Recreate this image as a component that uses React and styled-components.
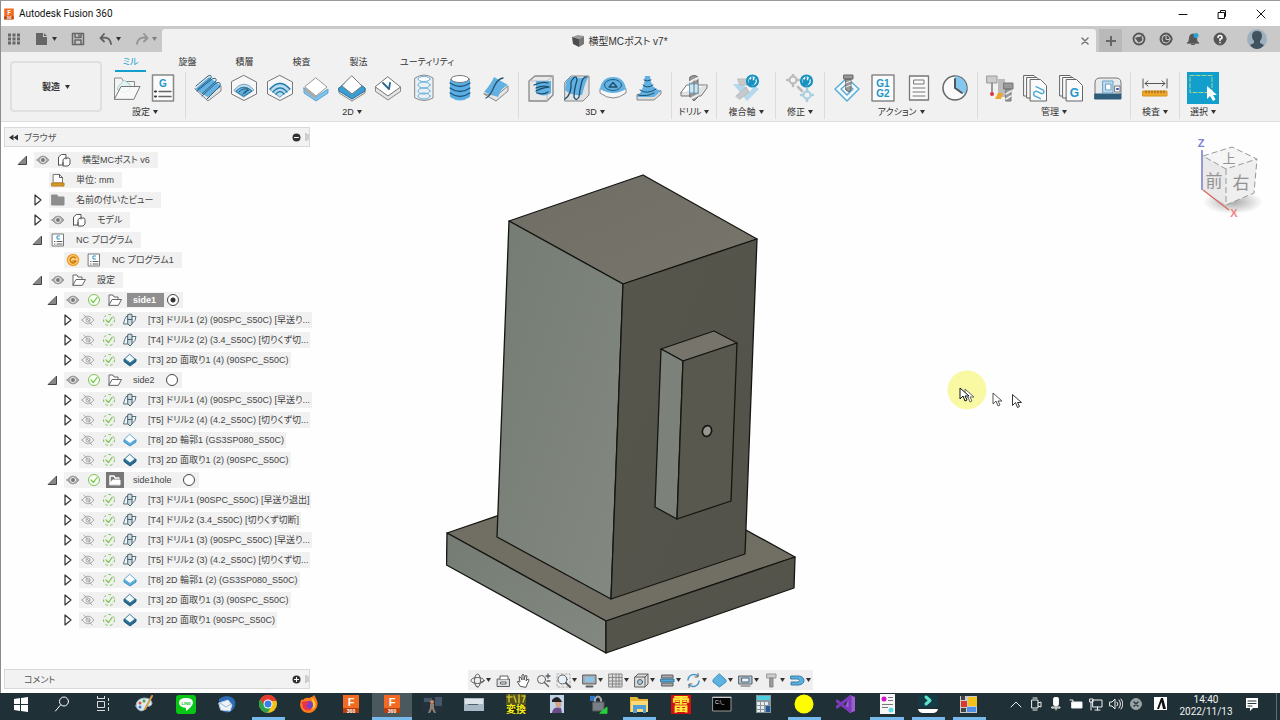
import React, { useState } from 'react'
import styled, { createGlobalStyle, css } from 'styled-components'

const colors = {
  chrome: '#c9c9c9',
  panel: '#f1f1f1',
  line: '#d9d9d9',
  text: '#333',
  icon: '#5b5f62',
  blue: '#62b1e2',
  deepblue: '#2384b8',
  accent: '#129fce',
  green: '#7cc255',
  taskbar: '#1f3036',
}

const uiFont = '"Liberation Sans", "Noto Sans CJK JP", sans-serif'
const winFont = 'Roboto, "Noto Sans CJK JP", sans-serif'

const GlobalStyle = createGlobalStyle`
  * { box-sizing: border-box; }
  body {
    margin: 0;
    background: #fff;
    color: ${colors.text};
    font-family: ${uiFont};
    font-size: 9px;
    font-feature-settings: 'palt';
  }
  button {
    padding: 0;
    border: 0;
    background: none;
    color: inherit;
    font: inherit;
    font-feature-settings: inherit;
  }
  svg { display: block; flex-shrink: 0; }
`

const Page = styled.div`
  display: flex;
  flex-direction: column;
  min-height: 100vh;
`

const Window = styled.div`
  display: flex;
  flex-direction: column;
  flex-grow: 1;
  border-top: 1px solid #9a9a9a;
  border-left: 1px solid #8c8c8c;
`

const TitleBar = styled.header`
  display: flex;
  align-items: center;
  height: 25px;
  padding-left: 2px;
  background: #fff;
  font-family: ${winFont};
  font-size: 10px;
  color: #111;
`

const AppName = styled.h1`
  flex-grow: 1;
  margin: 0 0 0 4px;
  font-size: 10px;
  font-weight: 400;
`

const WindowButton = styled.button`
  display: flex;
  align-items: center;
  justify-content: center;
  width: 39px;
  height: 25px;
`

const TabBar = styled.div`
  display: flex;
  height: 26px;
  background: ${colors.chrome};
`

const QuickTools = styled.div`
  display: flex;
  align-items: center;
  gap: 14px;
  width: 161px;
  padding-left: 6px;
  color: #5f5f5f;
`

const QuickButton = styled.button`
  display: flex;
  align-items: center;
  gap: 3px;
  opacity: ${(props) => (props.$dim ? 0.5 : 1)};
`

const DocumentTab = styled.div`
  display: flex;
  flex-grow: 1;
  align-items: center;
  margin-top: 3px;
  padding: 0 3px 0 0;
  border-radius: 3px 3px 0 0;
  background: ${colors.panel};
  font-size: 10px;
`

const DocumentName = styled.div`
  display: flex;
  flex-grow: 1;
  align-items: center;
  justify-content: center;
  gap: 3px;
`

const TabClose = styled.button`
  display: flex;
  padding: 4px;
  color: #777;
`

const NewTab = styled.button`
  display: flex;
  align-items: center;
  justify-content: center;
  width: 23px;
  margin: 3px 3px 0 3px;
  background: #b9b9b9;
  color: #666;
`

const AccountButton = styled.button`
  display: flex;
  align-items: center;
  justify-content: center;
  width: ${(props) => (props.$wide ? 47 : 27)}px;
  color: #555;
`

const Ribbon = styled.div`
  display: flex;
  height: 70px;
  background: ${colors.panel};
  border-bottom: 1px solid #dedede;
`

const WorkspaceButton = styled.button`
  display: flex;
  align-items: center;
  justify-content: center;
  gap: 5px;
  width: 92px;
  height: 51px;
  margin: 9px 0 0 9px;
  border: 2px solid #e0e0e0;
  border-radius: 4px;
  font-weight: 700;
`

const RibbonBody = styled.div`
  flex-grow: 1;
`

const RibbonTabs = styled.nav`
  display: flex;
  height: 20px;
`

const RibbonTab = styled.button`
  display: flex;
  align-items: center;
  justify-content: center;
  min-width: 57px;
  padding: 0 5px;
  color: ${(props) => (props.$active ? colors.accent : colors.text)};

  & span {
    height: 20px;
    padding: 0 8px;
    line-height: 20px;
    border-bottom: 2px solid ${(props) => (props.$active ? colors.accent : 'transparent')};
  }
`

const Groups = styled.div`
  display: flex;
  padding-left: 3px;
`

const Group = styled.section`
  padding: 0 ${(props) => props.$pad || 4}px;
  border-right: 1px solid ${(props) => (props.$last ? 'transparent' : '#dcdcdc')};
`

const GroupTools = styled.div`
  display: flex;
`

const ToolButton = styled.button`
  display: flex;
  align-items: center;
  justify-content: center;
  width: 36px;
  height: 32px;
`

const GroupLabel = styled.button`
  display: flex;
  align-items: center;
  justify-content: center;
  gap: 3px;
  width: 100%;
  height: 15px;
  white-space: nowrap;
`

const Workspace = styled.main`
  position: relative;
  display: grid;
  grid-template-columns: 309px 1fr 309px;
  grid-template-rows: 1fr 24px;
  flex-grow: 1;
  background: #fefefe;
`

const Browser = styled.aside`
  padding: 5px 0 0 3px;
`

const PanelBar = styled.div`
  display: flex;
  align-items: center;
  gap: 4px;
  height: 20px;
  margin-left: ${(props) => (props.$bottom ? 3 : 0)}px;
  padding: 0 0 0 4px;
  border: 1px solid ${colors.line};
  background: #f2f2f2;
  color: #555;
`

const PanelTitle = styled.span`
  flex-grow: 1;
  padding-left: ${(props) => (props.$indent ? 15 : 2)}px;
`

const Tree = styled.ul`
  margin: 3px 0 0;
  padding: 0;
  list-style: none;
`

const TreeRow = styled.li`
  display: flex;
  align-items: center;
  gap: 4px;
  height: 20px;
  padding-left: ${(props) => 12 + props.$level * 15}px;
`

const Expander = styled.button`
  display: flex;
  align-items: center;
  justify-content: center;
  flex-shrink: 0;
  width: 14px;
  height: 16px;
`

const TreeItem = styled.div`
  display: flex;
  align-items: center;
  gap: 3px;
  height: 16px;
  padding-right: ${(props) => (props.$radio ? 4 : 0)}px;
  background: #f1f1f1;
  white-space: nowrap;
`

const IconCell = styled.span`
  display: flex;
  align-items: center;
  justify-content: center;
  width: 18px;
  height: 16px;
  background: ${(props) => (props.$selected ? '#777' : 'transparent')};
`

const TreeLabel = styled.label`
  padding: 0 ${(props) => (props.$tight ? 2 : 8)}px 0 6px;
  line-height: 14px;
  color: #444;
  ${(props) => props.$selected && css`
    background: #8f8f8f;
    color: #fff;
    font-weight: 700;
  `}
`

const ActiveRadio = styled.input`
  appearance: none;
  width: 12px;
  height: 12px;
  margin: 0;
  border: 1px solid #444;
  border-radius: 50%;
  background: #fff;

  &:checked {
    background: radial-gradient(circle, #333 0 2px, #fff 3px);
  }
`

const Canvas = styled.section`
  display: flex;
  align-items: center;
  justify-content: center;
`

const CubeArea = styled.section`
  display: flex;
  justify-content: flex-end;
  padding: 14px 17px 0 0;
`

const Pointers = styled.svg`
  position: absolute;
  left: 944px;
  top: 245px;
`

const NavBar = styled.div`
  display: flex;
  align-items: center;
  justify-self: center;
  gap: 5px;
  height: 20px;
  margin-top: 1px;
  padding: 0 2px;
  background: #efefef;
`

const NavButton = styled.button`
  display: flex;
  align-items: center;
  gap: 1px;
`

const TaskBar = styled.footer`
  display: flex;
  height: 27px;
  overflow: hidden;
  background: ${colors.taskbar};
  color: #f2f2f2;
`

const TaskButtons = styled.div`
  display: grid;
  grid-template-columns: repeat(24, 1fr);
  width: 990px;
`

const TaskButton = styled.button`
  display: flex;
  align-items: center;
  justify-content: center;
  height: 27px;
  padding-bottom: ${(props) => (props.$running ? 3 : 6)}px;
  border-bottom: ${(props) => (props.$running ? 3 : 0)}px solid #76b9ed;
  background: ${(props) => (props.$active ? '#4b585d' : 'transparent')};
  margin: 0 ${(props) => (props.$active ? 1 : 4)}px;
`

const Tray = styled.div`
  display: flex;
  flex-grow: 1;
  align-items: center;
  justify-content: flex-end;
  padding-bottom: 6px;
`

const TrayButton = styled.button`
  display: flex;
  align-items: center;
  justify-content: center;
  width: ${(props) => (props.$wide ? 28 : 20)}px;
`

const Clock = styled.time`
  width: 64px;
  padding-top: 4px;
  text-align: center;
  font-family: ${winFont};
  font-size: 10px;
  line-height: 12px;
`

const ShowDesktop = styled.button`
  width: 4px;
  height: 32px;
  margin-left: 10px;
  border-left: 1px solid #5f6c70;
`

function Icon({ size = 14, box = size, children, ...rest }) {
  return (
    <svg width={size} height={size} viewBox={`0 0 ${box} ${box}`} fill="none" stroke={colors.icon} strokeLinejoin="round" strokeLinecap="round" aria-hidden="true" {...rest}>
      {children}
    </svg>
  )
}

const Caret = () => (
  <svg width="5" height="4" viewBox="0 0 5 4" aria-hidden="true"><path d="M0 0h5L2.500 4z" fill="#333" /></svg>
)

const Grip = () => (
  <svg width="4" height="10" viewBox="0 0 4 10" aria-hidden="true"><path d="M1 1v8M3 2v6" stroke="#aaa" /></svg>
)

const hexBox = <path d="M14 1.500 26.500 8v12L14 26.500 1.500 20V8z" fill="#f7f7f7" stroke="#777" />

const sheet = (
  <g fill="#fafafa" stroke="#666">
    <path d="M2 1.500h10l5 5V22H2z" />
    <path d="M5 3.500h10l5 5V24H5z" />
    <path d="M8.500 5.500h10l6 6V27h-16z" />
  </g>
)

const disabledBadge = (
  <g>
    <circle cx="20.500" cy="7" r="5.500" fill="#eef8fc" stroke="#1791be" strokeWidth="2.200" />
    <path d="M17.500 6l5.500 1.500-2 3-4 .5zM20 6V3M22.500 7l1-3" fill="#1791be" stroke="#1791be" strokeWidth="1.500" />
  </g>
)

const toolIcons = {
  folder: (
    <g>
      <path d="M1.500 25V4h7l2 3.500h11V13" fill="#f4f4f4" stroke="#888" />
      <path d="M5 13l6-7 6 4.500v5L11 19l-6-3z" fill="#e4f3f2" stroke="#a8cfce" />
      <path d="M1.500 25 8 12.500h19L21 25z" fill="#fafafa" fillOpacity=".8" stroke="#777" />
    </g>
  ),
  ncProgram: (
    <g>
      <path d="M3.500 1h21v26h-21z" fill="#fafafa" stroke="#888" strokeWidth="1.500" />
      <text x="14" y="12.500" textAnchor="middle" fontSize="10" fontWeight="700" fill="#1f96cc" stroke="none">G</text>
      <path d="M10 17.500h12M10 22.500h12" stroke="#666" strokeWidth="1.500" />
      <path d="M6 17.500h1M6 22.500h1" stroke="#333" strokeWidth="2" />
    </g>
  ),
  adaptive: (
    <g>
      <path d="M1 15 14 27l13-10v-5L14 22z" fill="#e2e2e2" stroke="#888" />
      <path d="M1 15 15 3l12 9-13 11z" fill={colors.blue} stroke="none" />
      <path d="M2 12 14 2q4-2 3 2L4 15M3 17 18 5q5-2 4 2L8 20M8 22 22 9q5-2 4 3L13 25" stroke="#2c6283" />
    </g>
  ),
  pocket: (
    <g>
      {hexBox}
      <path d="M4 16q10-12 20 0L14 23z" fill="#c8dfec" stroke="#75a6c0" />
      <path d="M6 17q8-8 16 0l-8 5z" fill={colors.blue} stroke="#28779f" />
      <path d="M9 18q3-4 9-3-1 4-5 5M14 18l5-2" stroke="#24546e" />
    </g>
  ),
  hexArc: (
    <g>
      {hexBox}
      <path d="M4 15q10-12 20 0L14 23z" fill="#b9dbee" stroke="#5a9cc0" />
      <path d="M7 18q7-8 14 0M10 20q4-5 8 0M4 15q10-11 20 0" stroke="#287fae" strokeWidth="1.500" />
    </g>
  ),
  contour: (
    <g>
      <path d="M2 17v2l12 8 12-8v-4L14 23 2 14z" fill="#7dc2ec" stroke="#5aa7d4" />
      <path d="M14 4 25 13 14 22 3 13z" fill="#fff" stroke="#999" />
      <path d="M3 13v4l11 8v-3z" fill="#aaa" stroke="none" />
    </g>
  ),
  chamfer: (
    <g>
      <path d="M1 14v5l13 8 13-8v-5L14 23z" fill="#e5e5e5" stroke="#888" />
      <path d="M1 14 14 4l13 10v3L14 25 1 17z" fill="#3a9ed4" stroke="#2a7198" />
      <path d="M14 2 24 12 14 20 4 12z" fill="#fff" stroke="#777" />
    </g>
  ),
  engrave: (
    <g>
      <path d="M1.500 13v4.500L14 26l12.500-8.500V13" fill="#e4e4e4" stroke="#888" />
      <path d="M14 3 26.500 13 14 22 1.500 13z" fill="#fff" stroke="#777" />
      <path d="m9 9 6 6 1-6" stroke="#27678e" strokeWidth="1.800" />
    </g>
  ),
  thread: (
    <g>
      <path d="M5 4q9-6 18 0v20q-9 5-18 0z" fill="#eaeff2" stroke="#888" />
      <ellipse cx="14" cy="5" rx="6" ry="2.500" fill="#fff" stroke="#62aee0" />
      <ellipse cx="14" cy="11" rx="6" ry="3" stroke="#62aee0" />
      <ellipse cx="14" cy="17" rx="6" ry="3" stroke="#62aee0" />
      <ellipse cx="14" cy="22" rx="6" ry="3" stroke="#62aee0" />
    </g>
  ),
  bore: (
    <g>
      <path d="M4 5v18q10 7 20 0V5z" fill="#5aaee3" stroke="none" />
      <ellipse cx="14" cy="5" rx="9" ry="3.500" fill="#fff" stroke="#777" />
      <path d="M4 9q10 7 20 0M4 14q10 7 20 0M4 19q10 7 20 0" stroke="#22597b" strokeWidth="1.300" />
    </g>
  ),
  ruled: (
    <g>
      <path d="M2 20 14 27l12-10v-5L15 21z" fill="#e4e4e4" stroke="#888" />
      <path d="M2 18Q9 10 12 3l14 8q-7 3-10 12z" fill={colors.blue} stroke="none" />
      <path d="M4 24q4-2 7-9 4-10 10-11" stroke="#245674" strokeWidth="1.300" />
    </g>
  ),
  adaptive3d: (
    <g>
      <path d="M2 7 8 2h18v19l-6 6H2z" fill="#e9e9e9" stroke="#888" strokeWidth="1.300" />
      <path d="M2 7h18v20M20 7l6-5" stroke="#bbb" />
      <path d="M9 7h15v12q-7 5-15 0z" fill={colors.blue} stroke="none" />
      <path d="M7 11q8-4 14-2M9 14q7-3 13-1-8 1-13 4M10 19q7 2 11-1" stroke="#1d4f6d" strokeWidth="1.300" />
    </g>
  ),
  parallel: (
    <g>
      <path d="M2 8 8 2h18v19l-6 6H2z" fill="#e2e2e2" stroke="#888" />
      <path d="M3 8q4-6 9-5 7 2 13 0-4 9-6 18Q8 22 2 16z" fill={colors.blue} stroke="none" />
      <path d="M2 25Q9 20 8 8q5-9 6-2-3 10-3 17 2 5 5 0 1-9 3-16 2-5 5-4" stroke="#1d4f6d" strokeWidth="1.300" />
    </g>
  ),
  scallop: (
    <g>
      <path d="M1 15v4q13 10 26 0v-4z" fill="#f7f7f7" stroke="#888" />
      <path d="M1 15Q3 3 14 3t13 12q-13 8-26 0z" fill={colors.blue} stroke="none" />
      <ellipse cx="14" cy="11" rx="8.500" ry="5.500" stroke="#246183" />
      <path d="M14 8.500 18 13h-8z" stroke="#1d4f6d" strokeWidth="1.300" />
    </g>
  ),
  ramp: (
    <g>
      <path d="M2 21v5h17l7-6v-3z" fill="#ddd" stroke="#888" />
      <path d="M10 2h5q0 12 11 15l-7 6H2q7-7 8-21z" fill={colors.blue} stroke="none" />
      <path d="M9 6q3 2 7 0M8 11q4 4 10 0M5 16q7 5 16-1M3 21q9 2 16-2" stroke="#1d4f6d" />
    </g>
  ),
  drill: (
    <g>
      <path d="M7 11h20l-6 8H1z" fill="#fff" stroke="#777" />
      <path d="M1 19v3h20l6-8v-3" fill="#e2e2e2" stroke="#777" />
      <path d="M10 3q4-3 8 0v20l-4 4-4-4z" fill="#999" stroke="#666" />
      <path d="M10 8l8-4M10 25l8-4" stroke="#eee" strokeWidth="2" />
      <path d="M10 10h8v9h-8z" fill="#cde7f5" stroke="#6da9cb" />
      <path d="M14 7v13" stroke="#777" />
    </g>
  ),
  multiAxis: (
    <g>
      <path d="M1 10h10l6 8 6-6 4 3-12 12z" fill="#b5d9ec" stroke="none" />
      <path d="m4 22 10-9 3 5-9 7zM6 5h9v6H8z" fill="#c6c8ca" stroke="#bbb" />
      {disabledBadge}
    </g>
  ),
  modify: (
    <g>
      <circle cx="7" cy="6" r="3.500" stroke="#bbb" strokeWidth="2" />
      <path d="M7 0v2M7 10v2M1 6h2M11 6h2M12 13l4 4" stroke="#bbb" strokeWidth="2.500" />
      <circle cx="21" cy="21" r="3.500" stroke="#a9cfdf" strokeWidth="2" />
      <path d="M21 15v2M21 25v2M15 21h2M25 21h2" stroke="#a9cfdf" strokeWidth="2.500" />
      {disabledBadge}
    </g>
  ),
  simulate: (
    <g>
      <path d="M14 4 26 15 14 27 2 15z" fill="#f3fafd" stroke="#5aaed4" strokeWidth="1.500" />
      <path d="m14 10 6 5-6 6-6-6z" stroke="#5aaed4" strokeWidth="1.500" />
      <path d="M11 1h9v4h-9zM13 5h5v11l-2 2-3-2z" fill="#999" stroke="#666" />
      <path d="m13 9 5-2M13 13l5-2" stroke="#eee" />
    </g>
  ),
  post: (
    <g>
      <path d="M3 1h22v26H3z" fill="#fafafa" stroke="#888" strokeWidth="1.500" />
      <text x="14" y="13" textAnchor="middle" fontSize="10" fontWeight="700" fill="#2294c8" stroke="none">G1</text>
      <text x="14" y="23" textAnchor="middle" fontSize="10" fontWeight="700" fill="#2294c8" stroke="none">G2</text>
    </g>
  ),
  setupSheet: (
    <g>
      <path d="M4.500 2h19v24h-19z" fill="#fafafa" stroke="#777" strokeWidth="1.300" />
      <path d="M9 6h10v4H9zM8 14h12M8 18h12M8 22h12" stroke="#777" />
    </g>
  ),
  time: (
    <g>
      <circle cx="14" cy="14" r="12" fill="#fafafa" stroke="#666" strokeWidth="1.500" />
      <path d="M14 2a12 12 0 0 1 10 18l-10-6z" fill="#84c8f0" stroke="none" />
      <path d="M14 5v9l7 5" stroke="#555" strokeWidth="2" />
    </g>
  ),
  toolLibrary: (
    <g>
      <path d="M1 2h10v7H1z" fill="#ccc" stroke="#999" />
      <path d="M6 9v9" stroke="#999" strokeWidth="2" />
      <circle cx="6" cy="20" r="2" fill="#d34" stroke="none" />
      <path d="M12 5h7v18h-7z" fill="#bbb" stroke="none" />
      <path d="m9 25 3-6h5l-2 6z" fill="#eaa92a" stroke="none" />
      <path d="M18 9h9v6h-9zM20 15h5v12h-5z" fill="#999" stroke="#777" />
      <path d="m20 20 5-3M20 25l5-3" stroke="#eee" strokeWidth="1.500" />
    </g>
  ),
  templates: (
    <g>{sheet}<path d="M12 14h8q3 2 0 4h-6q-3 2 0 5h7" stroke="#4aa9d7" strokeWidth="1.500" transform="rotate(25 16 18)" /></g>
  ),
  postLibrary: (
    <g>{sheet}<text x="16.500" y="23" textAnchor="middle" fontSize="12" fontWeight="700" fill="#1f96cc" stroke="none">G</text></g>
  ),
  machine: (
    <g>
      <path d="M1 20V9q0-5 5-5h16q5 0 5 5v11z" fill="#e7ebed" stroke="#777" />
      <path d="M1 20h26v5H1z" fill="#2f5e7a" stroke="#2f5e7a" />
      <path d="M9 7h10v12H9z" fill="#bcdcf0" stroke="#6a9fc0" />
      <path d="M12 10h5v6h-5z" fill="#fff" stroke="#6a9fc0" />
      <path d="M21 12h5v6h-5z" fill="#fff" stroke="#777" />
      <path d="M23 15h1" stroke="#35a" strokeWidth="2" />
    </g>
  ),
  measure: (
    <g>
      <path d="M2 5v9M26 5v9M4 9.500h20M7 7 4 9.500 7 12M21 7l3 2.500L21 12" stroke="#555" />
      <path d="M2 17h24v5H2z" fill="#f0a92e" stroke="#d89018" />
      <path d="M5 17v2M8 17v2M11 17v2M14 17v2M17 17v2M20 17v2M23 17v2" stroke="#8a5a10" />
    </g>
  ),
}

const groups = [
  { label: '設定', tools: [['folder', '新規設定'], ['ncProgram', 'NC プログラム']] },
  {
    label: '2D',
    tools: [['adaptive', '負荷制御'], ['pocket', 'ポケット'], ['hexArc', '面'], ['contour', '輪郭'], ['chamfer', '面取り'], ['engrave', '彫り込み'], ['thread', 'ねじ切り'], ['bore', '穴ぐり'], ['ruled', 'トレース']],
  },
  { label: '3D', tools: [['adaptive3d', '負荷制御'], ['parallel', '走査線'], ['scallop', 'スカラップ'], ['ramp', '等高線']] },
  { label: 'ドリル', tools: [['drill', 'ドリル']] },
  { label: '複合軸', pad: 11, tools: [['multiAxis', '複合軸']] },
  { label: '修正', pad: 6, tools: [['modify', '修正']] },
  { label: 'アクション', tools: [['simulate', 'シミュレート'], ['post', 'ポスト処理'], ['setupSheet', '設定シート'], ['time', '加工時間']] },
  { label: '管理', tools: [['toolLibrary', '工具ライブラリ'], ['templates', 'テンプレート'], ['postLibrary', 'ポストライブラリ'], ['machine', '機械ライブラリ']] },
  { label: '検査', pad: 6, tools: [['measure', '計測']] },
]

const ribbonTabs = ['ミル', '旋盤', '積層', '検査', '製法', 'ユーティリティ']

const treeIcons = {
  eye: <Icon size={14}><path d="M1 7q6-8 12 0-6 8-12 0z" fill="#aaa" stroke="#999" /><circle cx="7" cy="7" r="2.500" fill="#777" stroke="#eee" /></Icon>,
  hidden: <Icon size={14} stroke="#aaa"><path d="M1 7q6-8 12 0-6 8-12 0zM3 2l8 10" /><circle cx="7" cy="7" r="2" /></Icon>,
  body: <Icon size={14}><path d="M1.500 12V4l3-2.500H9V6M1.500 12H6V6.500L8 5h4l1 1.500V11l-2 2H6V9.500" fill="#fff" stroke="#555" /></Icon>,
  units: <Icon size={14}><path d="M2.500 1.500h6l3 3V10h-9z" fill="#fff" stroke="#777" /><path d="M8.500 1.500v3h3" /><path d="M1 10h12v3H1z" fill="#d69a2a" stroke="#b87d14" /></Icon>,
  closedFolder: <Icon size={14}><path d="M1 2h5l1 2h6v8H1z" fill="#8d8d8d" stroke="#8d8d8d" /></Icon>,
  nc: <Icon size={14}><path d="M1.500 1h11v12h-11z" fill="#fff" stroke="#777" /><path d="M8.500 3H6v3h2.500" stroke="#2a91c4" /><path d="M6 8.500h5M6 11h5M3.500 8.500h.5M3.500 11h.5" /></Icon>,
  stale: <Icon size={14}><circle cx="7" cy="7" r="5.500" fill="#ffd591" stroke="#f0a02c" strokeWidth="1.500" /><path d="M9.500 5A3 3 0 1 0 10 8H7" stroke="#d07a00" strokeWidth="1.500" /></Icon>,
  openFolder: <Icon size={14}><path d="M1 12V2h4l1 2h4v2.500M1 12l3-5.500h9.500L10.500 12z" fill="#fff" stroke="#666" /></Icon>,
  selectedFolder: <Icon size={14}><path d="M2 11V3h4l1 2h4" stroke="#fff" strokeWidth="1.500" /><path d="M2 11.500 4.500 7H12v4.500z" fill="#fff" stroke="#fff" /></Icon>,
  ok: <Icon size={14} stroke={colors.green}><circle cx="7" cy="7" r="5.500" fill="#f8fff4" /><path d="m4 7 2.500 2.500L10 4.500" strokeWidth="1.300" /></Icon>,
  okDashed: <Icon size={14} stroke={colors.green}><circle cx="7" cy="7" r="5.500" strokeDasharray="2 3" /><path d="m4 7 2.500 2.500L10 4.500" strokeWidth="1.300" /></Icon>,
  drill: <Icon size={14}><path d="M3.500 3.500H13l-1 4-3.500 3.500H.5L1.500 7z" fill="#eef6f8" stroke="#56717c" /><path d="M5 1.500q2-1 4 0V11l-2 2-2-2z" fill="#cfdde2" stroke="#47626d" /><path d="M5 6.500h4" stroke="#47626d" /></Icon>,
  chamfer: <Icon size={14}><path d="M1 6.500v2L7 13l6-4.500v-2z" fill="#1f6d96" stroke="#225873" /><path d="m7 1.500 5 4.500L7 10 2 6z" fill="#f4fbff" stroke="#447c98" /></Icon>,
  contour: <Icon size={14}><path d="M1 7v2l6 4 6-4V7z" fill="#54aee0" stroke="#3d94c6" /><path d="m7 1.500 5.500 5L7 10.500l-5.500-4z" fill="#fff" stroke="#65aad0" /></Icon>,
}

const op = (label, icon = 'drill') => ({ level: 3, state: 'closed', icons: ['hidden', 'okDashed', icon], label })

const tree = [
  { level: 0, state: 'open', icons: ['eye', 'body'], label: '横型MCポスト v6' },
  { level: 1, icons: ['units'], label: '単位: mm' },
  { level: 1, state: 'closed', icons: ['closedFolder'], label: '名前の付いたビュー' },
  { level: 1, state: 'closed', icons: ['eye', 'body'], label: 'モデル' },
  { level: 1, state: 'open', icons: ['nc'], label: 'NC プログラム' },
  { level: 2, icons: ['stale', 'nc'], label: 'NC プログラム1' },
  { level: 1, state: 'open', icons: ['eye', 'openFolder'], label: '設定' },
  { level: 2, state: 'open', icons: ['eye', 'ok', 'openFolder'], label: 'side1', radio: true, selected: true },
  op('[T3] ドリル1 (2) (90SPC_S50C) [早送り...'),
  op('[T4] ドリル2 (2) (3.4_S50C) [切りくず切...'),
  op('[T3] 2D 面取り1 (4) (90SPC_S50C)', 'chamfer'),
  { level: 2, state: 'open', icons: ['eye', 'ok', 'openFolder'], label: 'side2', radio: true },
  op('[T3] ドリル1 (4) (90SPC_S50C) [早送り...'),
  op('[T5] ドリル2 (4) (4.2_S50C) [切りくず切...'),
  op('[T8] 2D 輪郭1 (GS3SP080_S50C)', 'contour'),
  op('[T3] 2D 面取り1 (2) (90SPC_S50C)', 'chamfer'),
  { level: 2, state: 'open', icons: ['eye', 'ok', 'selectedFolder'], label: 'side1hole', radio: true },
  op('[T3] ドリル1 (90SPC_S50C) [早送り退出]'),
  op('[T4] ドリル2 (3.4_S50C) [切りくず切断]'),
  op('[T3] ドリル1 (3) (90SPC_S50C) [早送り...'),
  op('[T5] ドリル2 (3) (4.2_S50C) [切りくず切...'),
  op('[T8] 2D 輪郭1 (2) (GS3SP080_S50C)', 'contour'),
  op('[T3] 2D 面取り1 (3) (90SPC_S50C)', 'chamfer'),
  op('[T3] 2D 面取り1 (90SPC_S50C)', 'chamfer'),
]

const navItems = [
  ['オービット', true, <><ellipse cx="7.500" cy="7.500" rx="6.500" ry="3" /><ellipse cx="7.500" cy="7.500" rx="3" ry="6.500" /><path d="m11 9 3-1M6 13l2 1" /></>],
  ['ビュー正面', false, <><path d="M1.500 6h12v7.500h-12z" fill="#ddd" /><path d="M4 6V3h8v3M5 9h5v2H5z" fill="#fff" /></>],
  ['画面移動', false, <path d="M4 13 1.500 9q0-2 2 0L4 9 3 4q1-1 2 1l1 2V2q1-1 2 0v5l1-4q1-1 2 0l-1 5 2-2q1 0 1 1l-3 7z" fill="#fff" stroke="#555" />],
  ['ズーム', false, <><circle cx="5.500" cy="6.500" r="4" /><path d="m8.500 9.500 4 4M10 3h4M12 1v4M11 8h3" strokeWidth="1.300" /></>],
  ['フィット', true, <><path d="M1 1h13v13H1z" stroke="#aaa" strokeDasharray="2 2" /><circle cx="6.500" cy="6.500" r="4.500" fill="#e8f1f7" /><path d="m10 10 4 4" strokeWidth="2" /></>],
  ['表示設定', true, <><path d="M1 2h13v9H1z" fill="#aaa" /><path d="M3 4h9v5H3z" fill="#8cc5ea" stroke="none" /><path d="M4.500 13.500h6" strokeWidth="2" /></>],
  ['グリッドとスナップ', true, <path d="M1 1h13v13H1zM4.500 1v13M8 1v13M11 1v13M1 4.500h13M1 8h13M1 11h13" fill="#ddd" stroke="#888" />],
  ['ビューポート', true, <><path d="M1 4h10v10H1zM1 4l3-3h10v10l-3 3M11 4l3-3" fill="#ddd" /><circle cx="6" cy="9" r="2.500" fill="#a5cce3" /></>],
  ['環境', true, <><path d="M2 2h11v3H2zM2 10h11v3H2z" fill="#aaa" /><path d="M1 6h13v3H1z" fill="#57a8d8" stroke="#336f92" /></>],
  ['再生成', true, <><path d="M2 7a6 6 0 0 1 10-4M13 8A6 6 0 0 1 3 12" stroke="#3f97c8" strokeWidth="1.500" /><path d="M12 .5V4H9M3 14.500V11h3" stroke="#666" /></>],
  ['オブジェクト表示', true, <path d="m7.500 1 6.500 6v2l-6.500 5L1 9V7z" fill="#5eb2e2" stroke="#3e8db9" />],
  ['カメラ', true, <><path d="M1 3h13v8H1z" fill="#a8c8da" /><path d="M4 5h7v4H4zM3 13h9" fill="#eaf5fb" /></>],
  ['選択フィルタ', true, <><path d="M3 1h9v4H3z" fill="#ccc" stroke="#999" /><path d="M6 5h3v9H6z" fill="#999" stroke="#888" /></>],
  ['スナップ', true, <path d="M1 3h8q5 1 5 4.500T9 12H1V9h7q3-1.500 0-3H1z" fill="#58aee0" stroke="#3a7ea6" />],
]

const fusionLogo = (
  <>
    <path d="M2 1h16v13l-4 5H2z" fill="#f26a21" stroke="none" />
    <path d="M2 14h16v5H2z" fill="#b83f0c" stroke="none" />
    <text x="10" y="11.500" textAnchor="middle" fontSize="11" fontWeight="700" fill="#fff" stroke="none">F</text>
    <text x="10" y="18.500" textAnchor="middle" fontSize="5" fontWeight="700" fill="#fff" stroke="none">360</text>
  </>
)

const tasks = [
  { name: 'スタート', art: <path d="m3 5 6-1v6H3zM10 4l7-1v7h-7zM3 11h6v6l-6-1zM10 11h7v7l-7-1z" fill="#fff" stroke="none" /> },
  { name: '検索', art: <><circle cx="12" cy="7.500" r="4.500" stroke="#fff" /><path d="m8.500 11-5 6" stroke="#fff" /></> },
  { name: 'タスクビュー', art: <path d="M4 4.500h8M4 16.500h8M4.500 7.500h7v6h-7zM15.500 4v3M15.500 9v2M15.500 13v4M4.500 2v2M11.500 2v2" stroke="#ddd" strokeLinecap="butt" /> },
  { name: 'ペイント', art: <><path d="M2 12q0-7 8-8 8 0 8 6-1 3-5 2-2 5-6 5-4-1-5-5z" fill="#dce9ef" stroke="#9ab6c4" /><g stroke="none"><circle cx="6" cy="9" r="1.500" fill="#e04b3a" /><circle cx="10" cy="7" r="1.500" fill="#4aa84f" /><circle cx="6" cy="13" r="1.500" fill="#3b7bd1" /></g><path d="m11 15 7-13" stroke="#d79b4a" strokeWidth="2" /></> },
  { name: 'LINE', art: <><rect x="0" y="1" width="20" height="19" rx="3" fill="#08c615" stroke="none" /><path d="M3 9q0-5 7-5t7 5q-1 4-7 8v-3q-7-1-7-5z" fill="#fff" stroke="none" /><text x="10" y="11" textAnchor="middle" fontSize="4" fontWeight="700" fill="#08c615" stroke="none">LINE</text></> },
  { name: 'Thunderbird', art: <><path d="M2 5q8-6 15 0 4 8-4 13-8 2-11-6z" fill="#2c6cb5" stroke="none" /><path d="m2 9 9-3 4 5-2 6-9-1z" fill="#eef4fa" stroke="#c2d4e4" /><path d="m3 9 6 4 5-3" stroke="#9db8cf" /></> },
  { name: 'Google Chrome', running: true, art: <g stroke="none"><circle cx="10" cy="10" r="9" fill="#f2c218" /><path d="M2.200 5.500A9 9 0 0 1 18.600 7H10l-4 5z" fill="#e33b2e" /><path d="M2.200 5.500A9 9 0 0 0 9.500 19l4-7-6 1z" fill="#2ba24c" /><circle cx="10" cy="10" r="4.500" fill="#fff" /><circle cx="10" cy="10" r="3.500" fill="#3c7de6" /></g> },
  { name: 'Firefox', art: <g stroke="none"><path d="M2 6q1-1 2 0 2-3 6-2 4-1 5-3 5 7 3 12-3 6-9 6-7-1-8-8z" fill="#ff7a1a" /><path d="M12 3q6 5 4 10-2 3-5 3 5-4 1-13z" fill="#ffcb2e" /><circle cx="10" cy="11" r="4" fill="#7a3fc4" /><path d="M3 8q4-2 7 1l-3 3q3 4 7 2-5 5-10 0z" fill="#e8344b" /></g> },
  { name: 'Fusion 360', art: fusionLogo },
  { name: 'Autodesk Fusion 360', running: true, active: true, art: fusionLogo },
  { name: 'ゲーム', art: <g stroke="none"><path d="M0 2h20v16H0z" fill="#24303a" /><path d="M1 4h8v4H1zM12 3h7v9h-7z" fill="#445766" /><circle cx="9" cy="8" r="2" fill="#c98a62" /><path d="M7 10h4v4l2 5h-2l-2-4-2 4H5l2-5z" fill="#8d8176" /></g> },
  { name: 'メモ', art: <g stroke="none"><path d="M0 4h20v13H0z" fill="#a9b8c5" /><path d="M1 5h18v5H1z" fill="#dce4ea" /><path d="M4 10h10v1H4z" fill="#50606c" /></g> },
  { name: '変換', art: <><path d="M0 0h20v20H0z" fill="#55531f" stroke="none" /><path d="M0 11h20v9H0z" fill="#1f1f12" stroke="none" /><path d="M1 3h5M3 1v7M8 2l2 6M13 1v8M16 2h3l-2 6" stroke="#c8bd2a" strokeWidth="1.500" /><text x="10" y="18.500" textAnchor="middle" fontSize="10" fontWeight="700" fill="#f4f01c" stroke="none">変換</text></> },
  { name: 'キャラクター', art: <g stroke="none"><path d="M3 1h14v18H3z" fill="#bfd2e8" /><path d="M5 6q5-6 9 0l1 2H5z" fill="#222" /><path d="M8 8h6v5H9z" fill="#d6a283" /><path d="M5 19q1-7 9-5l1 5z" fill="#6b4a86" /></g> },
  { name: 'リモート', art: <g><path d="M2 2h5v5H2z" fill="#2a77c9" stroke="none" /><path d="M7 9V5q3-5 6 0v4" stroke="#aaa" strokeWidth="2" /><path d="M5 8h11v9H5z" fill="#777f86" stroke="#555" /><path d="m12 19 7-6v6z" fill="#22d43a" stroke="#22d43a" /></g> },
  { name: 'エクスプローラー', running: true, art: <g stroke="none"><path d="M1 3h7l2 2h9v13H1z" fill="#e8b433" /><path d="M2 7h17v11H2z" fill="#ffd978" /><path d="M4 11h13v8h-3v-4H8v4H4z" fill="#4d9fd6" /></g> },
  { name: '雷', art: <><path d="M0 1h20v19H0z" fill="#d40f0f" stroke="none" /><text x="10" y="17" textAnchor="middle" fontSize="18" fontWeight="700" fill="#ffec3d" stroke="none">雷</text></> },
  { name: 'ターミナル', art: <><path d="M1 3h18v14H1z" fill="#050505" stroke="#999" /><path d="M1 3.500h18" stroke="#ccc" /><text x="3" y="10" fontSize="5" fill="#eee" stroke="none">C:\_</text></> },
  { name: '電卓', art: <g stroke="none"><path d="M3 1h15v18H3z" fill="#8a969c" /><path d="M4 2h13v4H4z" fill="#4fd0e0" /><path d="M4 8h3v3H4zM8 8h3v3H8zM12 8h3v3h-3zM4 12h3v3H4zM8 12h3v3H8zM4 16h3v2H4zM8 16h3v2H8z" fill="#e7edef" /><path d="M13 12h4v6h-4z" fill="#1d5c96" /></g> },
  { name: '録画', running: true, art: <circle cx="10" cy="10" r="9.500" fill="#fdfd00" stroke="none" /> },
  { name: 'Visual Studio', art: <><path d="m14 1 5 2v14l-5 2-5-6z" fill="#9a5fd0" stroke="none" /><path d="M14 3v14L1 7M1 13 14 3" stroke="#7b3bb8" strokeWidth="3" /></> },
  { name: '文書', running: true, art: <g stroke="none"><path d="M3 0h15v20H3z" fill="#f6f6f6" /><circle cx="7" cy="5" r="2.500" fill="#d211c8" /><path d="M11 3h5v1h-5zM11 6h5v1h-5zM5 10h11v1H5zM5 13h6v1H5z" fill="#777" /><circle cx="14" cy="16" r="2.500" fill="#5ddbe0" /></g> },
  { name: 'Filmora', running: true, art: <><path d="M0 1h20v12H0z" fill="#143b45" stroke="none" /><path d="m8 3 4 3.500L8 10" stroke="#5fe3c7" strokeWidth="3" /><path d="M0 15h20q-1 4-5 4H5q-4 0-5-4z" fill="#fff" stroke="none" /></> },
  { name: 'ツール', running: true, art: <g stroke="none"><path d="M1 2h17v17H1z" fill="#c9c9c9" /><path d="M2 7h6v6H2z" fill="#d83a2e" /><path d="M9 3h9v9H9z" fill="#f3c01c" /><path d="M8 13h9v5H8z" fill="#4d8fe6" /><path d="M2 2h4v4H2zM2 14h5v4H2z" fill="#444" /></g> },
]

const trayItems = [
  ['隠れているインジケーター', <path d="m2 10 5-5 5 5" />],
  ['会議', <><path d="M3 3h6v8H3zM9 6l3-1v5l-3-1M4 1h4M4 13h4" /></>],
  ['マイク', <><rect x="4.500" y="0" width="5" height="9" rx="2" fill="#fff" /><path d="M3 10h8v1H3zM7 11v2" /></>],
  ['バッテリー', <><path d="M3 5h10v6H3z" fill="#fff" /><path d="M1 3h3v3" /></>],
  ['ネットワーク', <path d="M4 3h9v7H4zM6 13h5M8.500 10v3M1 2h3v3H1zM2 5v8" />],
  ['音量', <path d="M1 5h2l3-3v10L3 9H1zM8 5q2 2 0 4M10 3q3 4 0 8M12 2q4 5 0 10" />],
  ['状態', <><circle cx="7" cy="7" r="5.500" fill="#9aa2a5" stroke="#9aa2a5" /><path d="m5 5 4 4M9 5 5 9" stroke="#26363b" strokeWidth="1.500" /></>],
]

function Model() {
  return (
    <svg width="389" height="519" viewBox="446 136 389 519" stroke="#151512" strokeWidth="1.300" strokeLinejoin="round" role="img" aria-label="横型MCポスト">
      <defs>
        <linearGradient id="faceTop" x1="0" y1="0" x2="1" y2="1">
          <stop offset="0" stopColor="#6f6d65" /><stop offset="1" stopColor="#78756b" />
        </linearGradient>
        <linearGradient id="faceLeft" x1="0" y1="0" x2="1" y2="1">
          <stop offset="0" stopColor="#757c74" /><stop offset="1" stopColor="#838981" />
        </linearGradient>
        <linearGradient id="faceRight" x1="0" y1="0" x2="1" y2="1">
          <stop offset="0" stopColor="#57564d" /><stop offset="1" stopColor="#53524a" />
        </linearGradient>
      </defs>
      <path d="M447 533 635 469 795 557 606 621z" fill="#716e64" />
      <path d="M447 533 606 621 606 653 446.500 565z" fill="url(#faceLeft)" />
      <path d="M606 621 795 557 794 588 606 653z" fill="url(#faceRight)" />
      <path d="M509 221 643 175 757 239 623 284z" fill="url(#faceTop)" />
      <path d="M509 221 623 284 611 599 497 537z" fill="url(#faceLeft)" />
      <path d="M623 284 757 239 745 554 611 599z" fill="url(#faceRight)" />
      <path d="M661 349 714 331 737 343 683 361z" fill="#77746b" />
      <path d="M661 349 683 361 677 519 655 507z" fill="#7c827a" />
      <path d="M683 361 737 343 731 501 677 519z" fill="#59584f" />
      <ellipse cx="707" cy="431" rx="4.500" ry="5.500" fill="#98978f" strokeWidth="1.600" transform="rotate(20 707 431)" />
    </svg>
  )
}

function ViewCube() {
  return (
    <svg width="68" height="84" viewBox="0 0 68 84" fontFamily="Noto Sans CJK JP" role="img" aria-label="ビューキューブ">
      <defs>
        <radialGradient id="cubeShadow"><stop offset="0" stopColor="#aaa" /><stop offset="1" stopColor="#fefefe" /></radialGradient>
      </defs>
      <ellipse cx="38" cy="66" rx="30" ry="12" fill="url(#cubeShadow)" />
      <path d="M8 20 37 11 62 23 31 33z" fill="#f5f5f5" />
      <path d="M8 20 31 33 31 69 8 54z" fill="#e9e9e9" />
      <path d="M31 33 62 23 59 57 31 69z" fill="#efefef" />
      <path d="M8 20 37 11 62 23 31 33zM31 33v36l28-12 3-34" fill="none" stroke="#999" strokeDasharray="6 3" />
      <path d="M7 14v40" stroke="#7474c8" strokeWidth="1.500" />
      <path d="m8 54 26 20" stroke="#d86a6a" strokeWidth="1.500" />
      <g fill="#929292">
        <text x="34" y="27" textAnchor="middle" fontSize="13">上</text>
        <text x="19" y="51" textAnchor="middle" fontSize="17">前</text>
        <text x="46" y="53" textAnchor="middle" fontSize="17">右</text>
      </g>
      <g fontFamily="Liberation Sans" fontSize="11" fontWeight="700" textAnchor="middle">
        <text x="6" y="11" fill="#8080d4">Z</text>
        <text x="39" y="81" fill="#ee8585">X</text>
      </g>
    </svg>
  )
}

function CursorTrail() {
  const arrow = 'M0 0v11l3-3 2 5 2-1-2-4h4z'
  return (
    <Pointers width="80" height="50" viewBox="945 367 80 50" fill="#fff" stroke="#333" strokeLinejoin="round" aria-hidden="true">
      <circle cx="967" cy="390" r="19.500" fill="#f9f9a4" stroke="none" />
      <path d={arrow} transform="translate(965 389)" stroke="#666" />
      <path d={arrow} transform="translate(960 388)" stroke="#111" />
      <path d={arrow} transform="translate(993 393)" stroke="#555" />
      <path d={arrow} transform="translate(1012.500 394.500)" />
    </Pointers>
  )
}

function RibbonGroup({ label, tools, pad }) {
  return (
    <Group $pad={pad}>
      <GroupTools>
        {tools.map(([icon, name]) => (
          <ToolButton key={icon} aria-label={name}><Icon size={28}>{toolIcons[icon]}</Icon></ToolButton>
        ))}
      </GroupTools>
      <GroupLabel>{label}<Caret /></GroupLabel>
    </Group>
  )
}

function TreeNode({ node, index, active, onActive }) {
  const { level, state, icons, label, radio, selected } = node
  const id = `setup-${index}`
  return (
    <TreeRow $level={level}>
      <Expander aria-label={label} disabled={!state}>
        {state === 'open' && <Icon size={12}><path d="M1.500 10.500h8v-8z" fill="#888" stroke="#444" /></Icon>}
        {state === 'closed' && <Icon size={12}><path d="M3 1v10l6-5z" fill="#fff" stroke="#333" strokeWidth="1.200" /></Icon>}
      </Expander>
      <TreeItem $radio={radio}>
        {icons.map((name) => (
          <IconCell key={name} $selected={name === 'selectedFolder'}>{treeIcons[name]}</IconCell>
        ))}
        <TreeLabel as={radio ? 'label' : 'span'} htmlFor={radio ? id : undefined} $tight={level === 3} $selected={selected}>{label}</TreeLabel>
        {radio && <ActiveRadio type="radio" name="setup" id={id} checked={active === label} onChange={() => onActive(label)} />}
      </TreeItem>
    </TreeRow>
  )
}

export default function App() {
  const [tab, setTab] = useState('ミル')
  const [activeSetup, setActiveSetup] = useState('side1')

  return (
    <Page>
      <GlobalStyle />
      <Window>
        <TitleBar>
          <Icon size={12} box={20}>{fusionLogo}</Icon>
          <AppName>Autodesk Fusion 360</AppName>
          <WindowButton aria-label="最小化"><Icon size={10} stroke="#111"><path d="M1 5.500h8" /></Icon></WindowButton>
          <WindowButton aria-label="元に戻す"><Icon size={10} stroke="#111"><path d="M1.500 3.500h6v6h-6zM3.500 3.500v-2h5v6h-1" /></Icon></WindowButton>
          <WindowButton aria-label="閉じる"><Icon size={10} stroke="#111"><path d="m1 1 8 8M9 1 1 9" /></Icon></WindowButton>
        </TitleBar>

        <TabBar>
          <QuickTools>
            <QuickButton aria-label="データパネル">
              <Icon size={14}><path d="M1 1.500h3v3H1zM5.500 1.500h3v3h-3zM10 1.500h3v3h-3zM1 5.500h3v3H1zM5.500 5.500h3v3h-3zM10 5.500h3v3h-3zM1 9.500h3v3H1zM5.500 9.500h3v3h-3zM10 9.500h3v3h-3z" fill="#666" stroke="none" /></Icon>
            </QuickButton>
            <QuickButton aria-label="ファイル"><Icon size={14}><path d="M1 1h7v4h4v8H1zM9 1l3 3H9z" fill="#666" stroke="none" /></Icon><Caret /></QuickButton>
            <QuickButton aria-label="保存"><Icon size={14}><path d="M1.500 1.500h11v11h-11zM4 1.500v4h6v-4M4 12.500V8h6v4.500M8 3v1" stroke="#666" strokeWidth="1.500" /></Icon></QuickButton>
            <QuickButton aria-label="元に戻す"><Icon size={14}><path d="M5 2 1.500 6 5 9.500M2 6q9-2 10 6" stroke="#606060" strokeWidth="1.800" /></Icon><Caret /></QuickButton>
            <QuickButton aria-label="やり直し" $dim><Icon size={14}><path d="m9 2 3.500 4L9 9.500M12 6Q3 4 2 12" stroke="#606060" strokeWidth="1.800" /></Icon><Caret /></QuickButton>
          </QuickTools>
          <DocumentTab>
            <DocumentName>
              <Icon size={14} stroke="none"><path d="m1 3 6-2 6 1-5 3z" fill="#9a9a9a" /><path d="m1 3 7 2v8l-6-3z" fill="#4d4d4d" /><path d="m8 5 5-3v8l-5 3z" fill="#777" /></Icon>
              横型MCポスト v7*
            </DocumentName>
            <TabClose aria-label="タブを閉じる"><Icon size={8} stroke="#777"><path d="m1 1 6 6M7 1 1 7" strokeWidth="1.500" /></Icon></TabClose>
          </DocumentTab>
          <NewTab aria-label="新しいタブ"><Icon size={12}><path d="M6 1v10M1 6h10" stroke="#666" strokeWidth="2" strokeLinecap="butt" /></Icon></NewTab>
          <AccountButton aria-label="拡張機能"><Icon size={14}><circle cx="7" cy="7" r="5.500" stroke="#555" strokeWidth="1.800" /><path d="m4 6 5-1 1 3-3 2zM9 5l2-3" fill="#555" stroke="#555" /></Icon></AccountButton>
          <AccountButton aria-label="ジョブの状態"><Icon size={14}><circle cx="7" cy="7" r="6" fill="#555" stroke="#555" /><circle cx="7" cy="7" r="4" stroke="#ccc" /><path d="M7 4v3.500h3" stroke="#ccc" /></Icon></AccountButton>
          <AccountButton aria-label="通知"><Icon size={14}><path d="M1.500 11q2-1 2-5 0-4 3.500-4t3.500 4q0 4 2 5zM5.500 12.500h3" fill="#555" stroke="#555" /><circle cx="10" cy="3.500" r="2.500" fill="#2aa4d5" stroke="none" /></Icon></AccountButton>
          <AccountButton aria-label="ヘルプ"><Icon size={14}><circle cx="7" cy="7" r="6" fill="#555" stroke="#555" /><path d="M5 5.500q0-2 2-2t2 2Q9 7 7 7v1.500M7 10.500v.2" stroke="#fff" strokeWidth="1.500" /></Icon></AccountButton>
          <AccountButton aria-label="アカウント" $wide>
            <Icon size={20} stroke="none"><circle cx="10" cy="10" r="10" fill="#9eb0bd" /><path d="M10 2q5 0 5 5 0 3-2 5v2l4 2q-3 4-7 4t-7-4l4-2v-2Q5 10 5 7q0-5 5-5z" fill="#41525f" /></Icon>
          </AccountButton>
        </TabBar>

        <Ribbon>
          <WorkspaceButton>製造<Caret /></WorkspaceButton>
          <RibbonBody>
            <RibbonTabs>
              {ribbonTabs.map((name) => (
                <RibbonTab key={name} $active={tab === name} onClick={() => setTab(name)}><span>{name}</span></RibbonTab>
              ))}
            </RibbonTabs>
            <Groups>
              {groups.map((group, i) => <RibbonGroup key={i} {...group} />)}
              <Group $pad={5} $last>
                <GroupTools>
                  <ToolButton aria-label="選択">
                    <Icon size={32}>
                      <path d="M0 0h32v32H0z" fill={colors.accent} stroke="none" />
                      <path d="M3 3.500h22v17H3z" stroke="#a5d890" strokeDasharray="4 2" />
                      <path d="M20 14v13l3-3 3 5 2.500-1.500-2.500-4.500h4z" fill="#fff" stroke="none" />
                    </Icon>
                  </ToolButton>
                </GroupTools>
                <GroupLabel>選択<Caret /></GroupLabel>
              </Group>
            </Groups>
          </RibbonBody>
        </Ribbon>

        <Workspace>
          <Browser>
            <PanelBar>
              <Icon size={9} stroke="none"><path d="M4.500 1.500v6L0 4.500zM9 1.500v6L4.500 4.500z" fill="#333" /></Icon>
              <PanelTitle>ブラウザ</PanelTitle>
              <Icon size={9}><circle cx="4.500" cy="4.500" r="4" fill="#333" stroke="none" /><path d="M2.500 4.500h4" stroke="#fff" /></Icon>
              <Grip />
            </PanelBar>
            <Tree>
              {tree.map((node, i) => (
                <TreeNode key={i} node={node} index={i} active={activeSetup} onActive={setActiveSetup} />
              ))}
            </Tree>
          </Browser>
          <Canvas><Model /></Canvas>
          <CubeArea><ViewCube /></CubeArea>
          <PanelBar $bottom>
            <PanelTitle $indent>コメント</PanelTitle>
            <Icon size={9}><circle cx="4.500" cy="4.500" r="4" fill="#333" stroke="none" /><path d="M2.500 4.500h4M4.500 2.500v4" stroke="#fff" /></Icon>
            <Grip />
          </PanelBar>
          <NavBar>
            {navItems.map(([name, menu, art]) => (
              <NavButton key={name} aria-label={name}><Icon size={15}>{art}</Icon>{menu && <Caret />}</NavButton>
            ))}
          </NavBar>
          <CursorTrail />
        </Workspace>
      </Window>

      <TaskBar>
        <TaskButtons>
          {tasks.map(({ name, art, running, active }) => (
            <TaskButton key={name} aria-label={name} $running={running} $active={active}><Icon size={20}>{art}</Icon></TaskButton>
          ))}
        </TaskButtons>
        <Tray>
          {trayItems.map(([name, art]) => (
            <TrayButton key={name} aria-label={name}><Icon size={14} stroke="#f0f0f0">{art}</Icon></TrayButton>
          ))}
          <TrayButton aria-label="入力モード" $wide><Icon size={13}><path d="M0 0h13v13H0z" fill="#fff" stroke="none" /><path d="M3 12 7 1h2l3 11H9L7.500 5 5 12z" fill="#111" stroke="none" /></Icon></TrayButton>
          <Clock>14:40<br />2022/11/13</Clock>
          <TrayButton aria-label="通知センター" $wide><Icon size={14}><path d="M1 1h12v10H8l-3 3v-3H1z" fill="#fff" stroke="none" /><path d="M3 4h8M3 6.500h8M3 9h4" stroke="#26363b" /></Icon></TrayButton>
          <ShowDesktop aria-label="デスクトップの表示" />
        </Tray>
      </TaskBar>
    </Page>
  )
}
